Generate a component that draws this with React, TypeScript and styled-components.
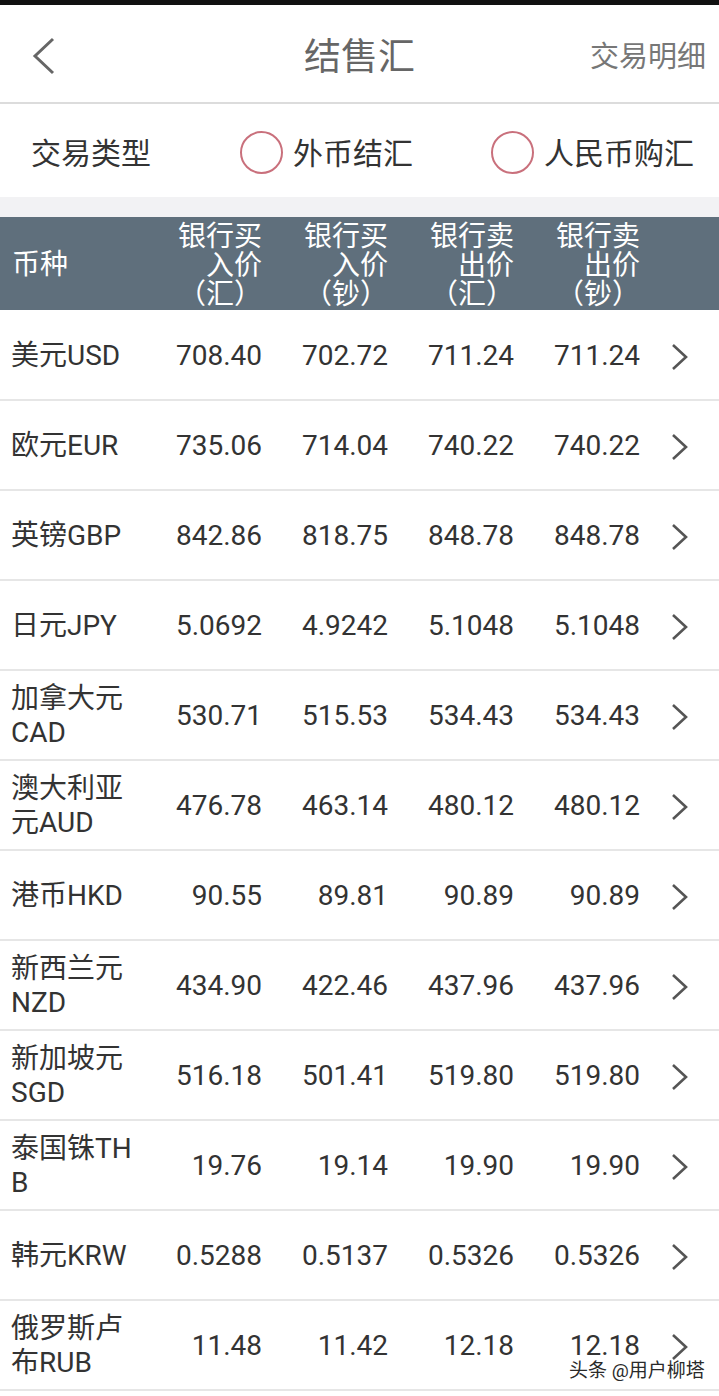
import React from 'react'
import styled, { createGlobalStyle } from 'styled-components'

type Rate = {
  name: string;
  values: string[];
};

const rates: Rate[] = [
  { name: '美元USD', values: ['708.40', '702.72', '711.24', '711.24'] },
  { name: '欧元EUR', values: ['735.06', '714.04', '740.22', '740.22'] },
  { name: '英镑GBP', values: ['842.86', '818.75', '848.78', '848.78'] },
  { name: '日元JPY', values: ['5.0692', '4.9242', '5.1048', '5.1048'] },
  { name: '加拿大元CAD', values: ['530.71', '515.53', '534.43', '534.43'] },
  { name: '澳大利亚元AUD', values: ['476.78', '463.14', '480.12', '480.12'] },
  { name: '港币HKD', values: ['90.55', '89.81', '90.89', '90.89'] },
  { name: '新西兰元NZD', values: ['434.90', '422.46', '437.96', '437.96'] },
  { name: '新加坡元SGD', values: ['516.18', '501.41', '519.80', '519.80'] },
  { name: '泰国铢THB', values: ['19.76', '19.14', '19.90', '19.90'] },
  { name: '韩元KRW', values: ['0.5288', '0.5137', '0.5326', '0.5326'] },
  { name: '俄罗斯卢布RUB', values: ['11.48', '11.42', '12.18', '12.18'] },
];

const headers = [
  ['银行买', '入价', '（汇）'],
  ['银行买', '入价', '（钞）'],
  ['银行卖', '出价', '（汇）'],
  ['银行卖', '出价', '（钞）'],
];

const GlobalStyle = createGlobalStyle`
  body {
    margin: 0;
    background: #ffffff;
    font-family: Roboto, "Noto Sans CJK SC", sans-serif;
  }
`;

const Page = styled.div`
  position: relative;
  width: 719px;
  min-height: 1396px;
  background: #ffffff;
`;

const StatusStrip = styled.div`
  height: 5px;
  background: #111111;
`;

const NavBar = styled.div`
  display: grid;
  grid-template-columns: 160px 1fr 160px;
  align-items: center;
  height: 97px;
  border-bottom: 2px solid #dcdcdc;
`;

const BackButton = styled.div`
  display: flex;
  align-items: center;
  padding-left: 32px;
  padding-top: 4px;
`;

const Title = styled.div`
  text-align: center;
  font-size: 37px;
  color: #666666;
`;

const NavAction = styled.div`
  text-align: right;
  padding-right: 13px;
  font-size: 29px;
  color: #777777;
  white-space: nowrap;
`;

const TypeRow = styled.div`
  display: flex;
  align-items: center;
  height: 93px;
  padding-left: 31px;
  font-size: 30px;
  color: #333333;
`;

const TypeLabel = styled.span`
  width: 209px;
`;

const RadioOption = styled.label<{ $width: number }>`
  display: flex;
  align-items: center;
  width: ${p => p.$width}px;
  gap: 10px;
`;

const RadioCircle = styled.span`
  width: 39px;
  height: 39px;
  border-radius: 50%;
  border: 2px solid #c9707c;
  flex: none;
  margin-top: 3px;
`;

const Spacer = styled.div`
  height: 20px;
  background: #f2f2f4;
`;

const Grid = styled.div`
  display: grid;
  grid-template-columns: 126px repeat(4, 126px) 1fr;
  padding-left: 11px;
  align-items: center;
`;

const HeaderRow = styled(Grid)`
  height: 93px;
  background: #5f6f7c;
  color: #ffffff;
  font-size: 28px;
  line-height: 29px;
`;

const HeaderName = styled.div`
  padding-left: 1px;
  padding-top: 2px;
`;

const HeaderCell = styled.div`
  text-align: right;
  margin-left: -10px;
  margin-right: 1px;
  padding-top: 4px;
`;

const DataRow = styled(Grid)`
  height: 88px;
  border-bottom: 2px solid #e6e6e6;
  color: #333333;
  font-size: 28px;
  &:first-of-type {
    margin-top: 1px;
  }
`;

const NameCell = styled.div`
  line-height: 34px;
  word-break: break-all;
  padding-top: 2px;
`;

const ValueCell = styled.div`
  text-align: right;
  padding-right: 1px;
`;

const ChevronCell = styled.div`
  display: flex;
  justify-content: center;
  padding-top: 4px;
`;

const Watermark = styled.div`
  position: absolute;
  left: 569px;
  top: 1355px;
  font-size: 19px;
  color: #2a2a2a;
  text-shadow: 0 0 2px #ffffff, 0 0 2px #ffffff;
`;

const BackIcon = () => (
  <svg width="24" height="38" viewBox="0 0 24 38">
    <polyline points="21,2 3,19 21,36" fill="none" stroke="#666666" strokeWidth="3" />
  </svg>
);

const Chevron = () => (
  <svg width="20" height="28" viewBox="0 0 20 28">
    <polyline points="3,2 16,14 3,26" fill="none" stroke="#555555" strokeWidth="2.6" />
  </svg>
);

const App: React.FC = () => {
  return (
    <Page>
      <GlobalStyle />
      <StatusStrip />
      <NavBar>
        <BackButton>
          <BackIcon />
        </BackButton>
        <Title>结售汇</Title>
        <NavAction>交易明细</NavAction>
      </NavBar>
      <TypeRow>
        <TypeLabel>交易类型</TypeLabel>
        <RadioOption $width={251}>
          <RadioCircle />
          <span>外币结汇</span>
        </RadioOption>
        <RadioOption $width={220}>
          <RadioCircle />
          <span>人民币购汇</span>
        </RadioOption>
      </TypeRow>
      <Spacer />
      <HeaderRow>
        <HeaderName>币种</HeaderName>
        {headers.map((lines, i) => (
          <HeaderCell key={i}>
            {lines.map((l, j) => (
              <div key={j}>{l}</div>
            ))}
          </HeaderCell>
        ))}
      </HeaderRow>
      <div>
        {rates.map(rate => (
          <DataRow key={rate.name}>
            <NameCell>{rate.name}</NameCell>
            {rate.values.map((v, i) => (
              <ValueCell key={i}>{v}</ValueCell>
            ))}
            <ChevronCell>
              <Chevron />
            </ChevronCell>
          </DataRow>
        ))}
      </div>
      <Watermark>头条 @用户柳塔</Watermark>
    </Page>
  )
};

export default App;
